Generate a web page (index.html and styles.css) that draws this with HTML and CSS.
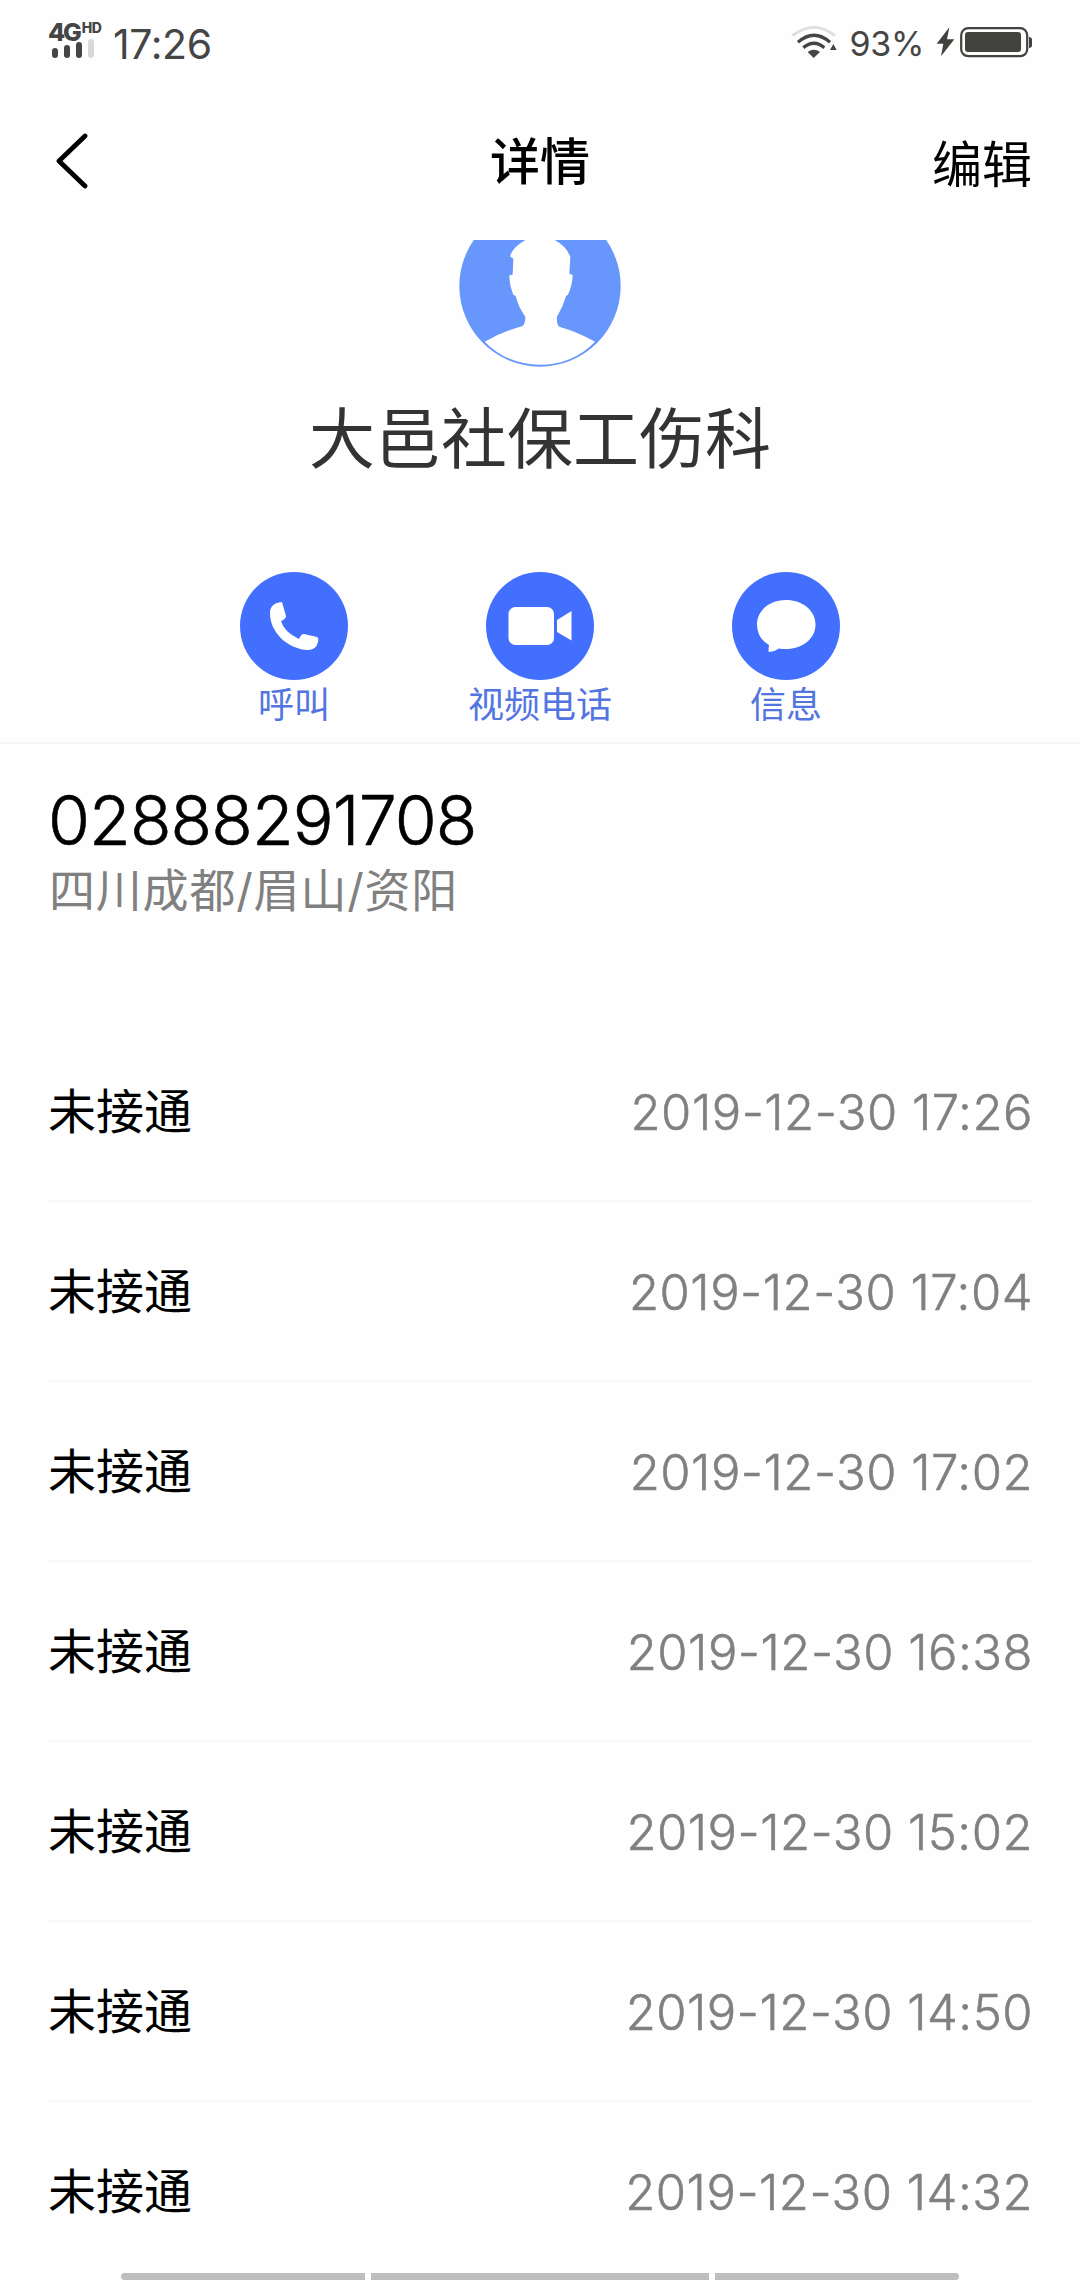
FILE: index.html
```html
<!DOCTYPE html>
<html lang="zh-CN">
<head>
<meta charset="utf-8">
<title>详情</title>
<link rel="stylesheet" href="styles.css">
</head>
<body>
<div class="screen">
  <header class="status">
    <div class="network">
      <div class="network-type">4G<span class="hd">HD</span></div>
      <svg class="signal" width="44" height="20" viewBox="0 0 44 20"><g fill="#454545"><rect x="4" y="9" width="6" height="10" rx="3"/><rect x="16" y="6" width="6" height="13" rx="3"/><rect x="28" y="3" width="6" height="16" rx="3"/></g><rect x="40" y="0" width="6" height="19" rx="3" fill="#d9d9d9"/></svg>
    </div>
    <span class="clock">17:26</span>
    <div class="status-right">
      <svg class="wifi" width="48" height="36" viewBox="34 72 144 108"><g fill="none" stroke="#454545" stroke-width="10"><path d="M38 107Q103 57 166 107" stroke="#dedede" stroke-width="8"/><path d="M55 127Q103 85 151 127"/><path d="M71 143Q103 117 134 143"/></g><path d="M84 156Q103 142 121 156L102 174ZM161 132L171 150H151Z" fill="#454545"/></svg>
      <span class="percent">93%</span>
      <svg class="bolt" width="19" height="30" viewBox="468 82 57 90"><path d="M508 83L470 132H490L483 170L523 119H501Z" fill="#42423f"/></svg>
      <svg class="battery" width="73" height="32" viewBox="0 0 73 32"><rect x="1.2" y="2.2" width="66" height="28" rx="7" fill="none" stroke="#42423f" stroke-width="2.2"/><rect x="5" y="6" width="56" height="20" rx="3" fill="#42423f"/><path d="M69 11Q72 11 72 14V19Q72 22 69 22Z" fill="#42423f"/></svg>
    </div>
  </header>
  <nav class="topbar">
    <svg class="back" width="34" height="56" viewBox="0 0 34 56"><path d="M30 3L4 28L30 53" fill="none" stroke="#000" stroke-width="4.8" stroke-linecap="round" stroke-linejoin="round"/></svg>
    <h1 class="title">详情</h1>
    <span class="edit">编辑</span>
  </nav>
  <section class="profile">
    <svg class="avatar" width="162" height="128" viewBox="117 60 486 384"><circle cx="360" cy="198" r="242" fill="#6796fd"/><path d="M316 60Q278 82 270 109L280 116L278 164L268 166Q269 199 280 224L287 228Q295 261 316 290Q316 314 306 319Q243 336 194 365Q262 434 360 434Q458 434 525 365Q474 336 418 320Q409 312 411 290Q430 259 438 228L444 224Q457 196 458 165L448 161L451 112Q442 80 404 60Z" fill="#fff"/></svg>
    <h2 class="name">大邑社保工伤科</h2>
    <div class="actions">
      <div class="action"><svg width="108" height="108" viewBox="0 0 108 108"><circle cx="54" cy="54" r="54" fill="#436fff"/><path d="M42 30L46 44Q46 47 41 49Q44 60 59 67Q61 62 64 62L77 65Q79 66 78 70Q76 78 68 78C47 77 30 60 30 41Q30 31 42 30Z" fill="#fff"/></svg><span>呼叫</span></div>
      <div class="action"><svg width="108" height="108" viewBox="0 0 108 108"><circle cx="54" cy="54" r="54" fill="#436fff"/><rect x="22.5" y="35" width="45.5" height="38" rx="7" fill="#fff"/><path d="M71 48L85.5 39V68.500L71 60Z" fill="#fff"/></svg><span>视频电话</span></div>
      <div class="action"><svg width="108" height="108" viewBox="0 0 108 108"><circle cx="54" cy="54" r="54" fill="#436fff"/><path d="M54 28C70 28 83.500 38 83.500 52.500C83.500 67 70 77 54 77Q50 77 47 76.500Q42 80 37 80Q36 80 37 73Q25 66 25 52.500C25 38 38 28 54 28Z" fill="#fff"/></svg><span>信息</span></div>
    </div>
  </section>
  <section class="contact">
    <div class="phone">02888291708</div>
    <div class="region">四川成都/眉山/资阳</div>
  </section>
  <ul class="calls">
    <li><span>未接通</span><time>2019-12-30 17:26</time></li>
    <li><span>未接通</span><time>2019-12-30 17:04</time></li>
    <li><span>未接通</span><time>2019-12-30 17:02</time></li>
    <li><span>未接通</span><time>2019-12-30 16:38</time></li>
    <li><span>未接通</span><time>2019-12-30 15:02</time></li>
    <li><span>未接通</span><time>2019-12-30 14:50</time></li>
    <li><span>未接通</span><time>2019-12-30 14:32</time></li>
  </ul>
  <footer class="gestures"><i></i><i></i><i></i></footer>
</div>
</body>
</html>
```
FILE: styles.css
```css
* { box-sizing: border-box; margin: 0; padding: 0; }
body { background: #fefefe; color: #000; font-family: Inter, "Noto Sans CJK SC", sans-serif; }
svg { display: block; flex: none; }
.screen { width: 1080px; height: 2280px; overflow: hidden; display: flex; flex-direction: column; }

.status { height: 84px; display: flex; align-items: flex-start; padding: 0 48px; color: #454545; flex: none; }
.network { width: 65px; padding-top: 20px; }
.network-type { height: 19px; font-size: 25px; line-height: 24px; font-weight: 800; letter-spacing: -2.2px; display: flex; }
.hd { font-size: 14px; line-height: 16px; letter-spacing: -0.4px; margin-left: 2px; }
.signal { overflow: visible; }
.clock { font-size: 41px; line-height: 48px; margin-top: 20px; letter-spacing: -0.4px; }
.status-right { margin-left: auto; display: flex; align-items: flex-start; }
.wifi { margin-top: 24px; }
.percent { font-size: 34px; line-height: 44px; margin: 22px 0 0 10px; letter-spacing: -0.3px; }
.bolt { margin: 27px 0 0 12px; }
.battery { margin: 26px -1px 0 5px; }

.topbar { height: 156px; display: grid; grid-template-columns: 1fr auto 1fr; padding: 0 48px; flex: none; }
.back { margin: 49px 0 0 7px; }
.title { font-size: 50px; line-height: 60px; font-weight: 500; margin-top: 48px; }
.edit { font-size: 50px; line-height: 60px; justify-self: end; margin-top: 51px; }

.profile { height: 504px; border-bottom: 2px solid #f7f7f7; display: flex; flex-direction: column; align-items: center; flex: none; }
.name { font-size: 66px; line-height: 80px; font-weight: 400; color: #333; margin-top: 31px; }
.actions { display: flex; gap: 86px; margin-top: 93px; }
.action { width: 160px; display: flex; flex-direction: column; align-items: center; color: #5275e2; font-size: 36px; line-height: 50px; white-space: nowrap; }

.contact { height: 278px; padding: 36px 48px 0; flex: none; }
.phone { font-size: 68px; line-height: 80px; font-weight: 300; letter-spacing: -0.9px; -webkit-text-stroke: 0.6px; }
.region { font-size: 46px; line-height: 60px; color: #808080; letter-spacing: 0.8px; padding-left: 1px; }

.calls { list-style: none; padding: 0 48px; height: 1251px; overflow: hidden; flex: none; }
.calls li { height: 180px; display: flex; justify-content: space-between; align-items: center; border-bottom: 2px solid #f8f8f8; font-size: 48px; }
.calls li:last-child { border-bottom-color: transparent; }
.calls span { margin-top: -6px; }
.calls time { color: #808080; font-size: 49px; font-weight: 300; letter-spacing: 0.5px; margin: 3px -1px 0 0; -webkit-text-stroke: 0.5px; }

.gestures { height: 7px; display: grid; grid-template-columns: 244px 338px 244px; gap: 6px; padding-left: 121px; }
.gestures i { background: #bebebe; }
.gestures i:first-child { border-radius: 4px 0 0 4px; }
.gestures i:last-child { border-radius: 0 4px 4px 0; }
```
